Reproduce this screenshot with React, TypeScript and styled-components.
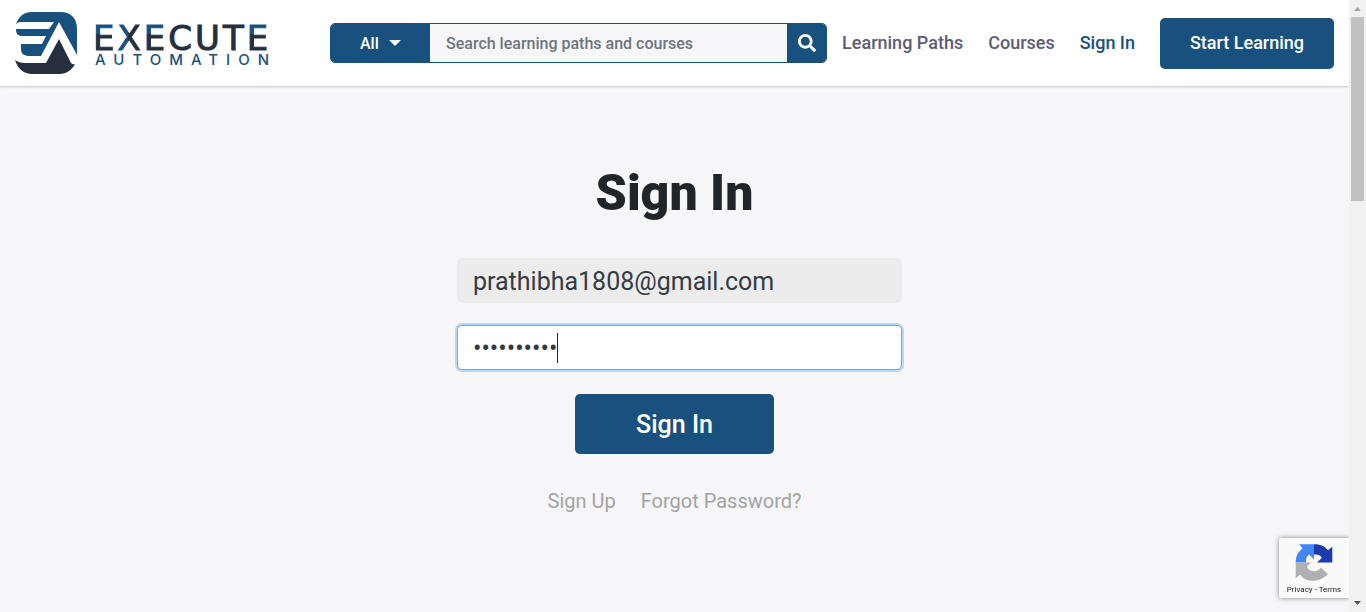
import React, { useState } from "react";
import styled, { createGlobalStyle, css } from "styled-components";

const blue = "#18517e";
const ink = "#252f3d";

const GlobalStyle = createGlobalStyle`
  *, *::before, *::after { box-sizing: border-box; }
  body {
    margin: 0;
    background: #f6f6f8;
    color: #212529;
    font-family: Roboto, "Liberation Sans", sans-serif;
    font-size: 16px;
    line-height: 24px;
  }
  button, input, select { font-family: inherit; margin: 0; }
  a { text-decoration: none; }
`;

const Page = styled.div`
  min-height: 100vh;
  padding-right: 17px;
`;

const Header = styled.header`
  display: flex;
  align-items: center;
  height: 86px;
  padding: 0 15px;
  background: #fff;
  box-shadow: 0 1px 2px rgba(0, 0, 0, 0.2);
`;

const Brand = styled.a`
  display: flex;
  flex: none;
  align-items: center;
  gap: 16px;
  width: 255px;
  margin-right: 60px;
`;

const Mark = styled.svg`
  flex: none;
  width: 62px;
  height: 62px;
`;

const Wordmark = styled.span`
  display: flex;
  flex-direction: column;
  padding-top: 6px;
`;

const BrandName = styled.span`
  display: flex;
  gap: 3px;
  color: ${ink};
  font: 34px/28px "DejaVu Sans", sans-serif;
  -webkit-text-stroke: 1px;
`;

const Letter = styled.span`
  display: block;
`;

const TwoTone = styled(Letter)<{ $angle: string; $stop: string }>`
  background: linear-gradient(${(p) => p.$angle}, ${blue} ${(p) => p.$stop}, ${ink} ${(p) => p.$stop});
  background-clip: text;
  -webkit-background-clip: text;
  color: transparent;
`;

const BrandSub = styled.span`
  padding-left: 2px;
  color: ${blue};
  font: 500 15px/16px Inter, sans-serif;
  letter-spacing: 8px;
  white-space: nowrap;
`;

const Search = styled.form`
  display: flex;
  flex: 1;
  min-width: 0;
  height: 40px;
  margin-right: 15px;
  overflow: hidden;
  border: 1px solid ${blue};
  border-radius: 5px;
  background: #f6f6f8;
`;

const FilterBox = styled.label`
  display: flex;
  flex: none;
  align-items: center;
  justify-content: center;
  gap: 10px;
  width: 99px;
  background: ${blue};
`;

const Filter = styled.select`
  appearance: none;
  padding: 0;
  border: 0;
  background: transparent;
  color: #fff;
  font-size: 16px;
  font-weight: 500;
`;

const SearchInput = styled.input`
  flex: 1;
  min-width: 0;
  padding: 0 16px;
  border: 0;
  outline: 0;
  background: transparent;
  font-size: 16px;
  font-weight: 500;
  &::placeholder { color: #6c757d; opacity: 1; }
`;

const SearchButton = styled.button`
  display: flex;
  flex: none;
  align-items: center;
  justify-content: center;
  width: 39px;
  padding: 0;
  border: 0;
  background: ${blue};
`;

const Nav = styled.nav`
  display: flex;
  flex: none;
  align-items: center;
  gap: 25px;
`;

const NavLink = styled.a<{ $active?: boolean }>`
  color: ${(p) => (p.$active ? blue : "#5c5c77")};
  font-size: 18px;
  font-weight: 500;
`;

const buttonLook = css`
  border: 0;
  border-radius: 5px;
  background: ${blue};
  color: #fff;
  font-weight: 500;
`;

const StartButton = styled.button`
  ${buttonLook}
  width: 174px;
  height: 51px;
  padding: 0 0 2px;
  font-size: 18px;
`;

const Main = styled.main`
  display: flex;
  flex-direction: column;
  align-items: center;
  padding: 77px 15px 60px;
`;

const Title = styled.h1`
  margin: 0 0 35px;
  font-size: 50px;
  font-weight: 900;
  line-height: 60px;
`;

const LoginForm = styled.form`
  display: flex;
  flex-direction: column;
  align-items: center;
  width: 100%;
`;

const Field = styled.div`
  position: relative;
  width: 100%;
  max-width: 455px;
  padding-left: 10px;
  margin-bottom: 22px;
`;

const TextInput = styled.input<{ $focused?: boolean }>`
  display: block;
  width: 100%;
  height: 45px;
  padding: 1px 15px 0;
  border: 1px solid ${(p) => (p.$focused ? "#8fa3b8" : "transparent")};
  border-radius: 5px;
  outline: 0;
  background: ${(p) => (p.$focused ? "#fff" : "#ececec")};
  background-clip: border-box;
  box-shadow: ${(p) => (p.$focused ? "0 0 0 2px #b8d8fb" : "none")};
  color: #333c42;
  font-size: 25px;
`;

const Caret = styled.span`
  position: absolute;
  top: 8px;
  left: 110px;
  width: 1px;
  height: 30px;
  background: #212529;
`;

const SubmitButton = styled.button`
  ${buttonLook}
  width: 199px;
  height: 60px;
  margin-top: 2px;
  font-size: 25px;
`;

const Links = styled.div`
  display: flex;
  gap: 25px;
  margin-top: 35px;
`;

const QuietLink = styled.a`
  color: #a3a3a3;
  font-size: 20px;
`;

const Recaptcha = styled.aside`
  position: fixed;
  right: 17px;
  bottom: 14px;
  display: flex;
  flex-direction: column;
  align-items: center;
  width: 70px;
  height: 60px;
  padding-top: 5px;
  border-radius: 2px 0 0 2px;
  background: #f9f9f9;
  box-shadow: 0 0 5px gray;
  clip-path: inset(-8px 0 -8px -8px);
`;

const Legal = styled.span`
  color: #222;
  font-size: 8px;
  line-height: 16px;
  white-space: nowrap;
  a { color: inherit; }
`;

const ScrollTrack = styled.div`
  position: fixed;
  top: 0;
  right: 0;
  bottom: 0;
  display: flex;
  flex-direction: column;
  align-items: center;
  width: 17px;
  background: #f1f1f1;
`;

const ScrollRail = styled.div`
  flex: 1;
`;

const ScrollArrow = styled.svg`
  display: block;
  flex: none;
  width: 17px;
  height: 17px;
`;

const Thumb = styled.div`
  width: 13px;
  height: 30vh;
  background: #c1c1c1;
`;

const LogoMark = () => (
  <Mark viewBox="0 0 62 62" aria-hidden="true">
    <path d="M1 12C4 4 9 0 17 0H45C56 0 62 6 62 17V43L44 10L26 44H15C9 44 6 42 6 37V32H27L31 24H7C3 24 1 22 1 17H34L39 10H6Q3 10 1 12Z" fill={blue} />
    <path d="M0 48Q4 51 10 51H31L44 27L56 51Q58 53 60 52C57 58 51 62 45 62H17C9 62 3 57 0 48Z" fill={ink} />
  </Mark>
);

const SearchIcon = () => (
  <svg width="18" height="18" viewBox="0 0 512 512" fill="#fff" aria-hidden="true">
    <path d="M505 442.700 405.300 343c-4.500-4.500-10.600-7-17-7H372c27.600-35.300 44-79.700 44-128C416 93.100 322.900 0 208 0S0 93.100 0 208s93.100 208 208 208c48.300 0 92.700-16.400 128-44v16.300c0 6.400 2.500 12.500 7 17l99.700 99.700c9.400 9.400 24.600 9.400 33.900 0l28.300-28.300c9.400-9.400 9.400-24.600.1-34zM208 336c-70.700 0-128-57.200-128-128 0-70.700 57.200-128 128-128 70.700 0 128 57.200 128 128 0 70.700-57.200 128-128 128z" />
  </svg>
);

const RecaptchaIcon = () => (
  <svg width="40" height="40" viewBox="0 0 64 64" aria-hidden="true">
    <path d="M62 32V6L55 12C49 4 41 2 32 2V19C38 18 42 20 45 24L37 32Z" fill="#1c3aa9" />
    <path d="M32 2H8L13 9C5 15 2 23 2 32H19C18 26 20 22 24 19L32 27Z" fill="#4285f4" />
    <path d="M2 32V58L9 52C16 61 27 64 37 61C44 60 50 56 55 51L43 40C39 46 34 47 29 46C25 45 22 43 20 39L27 32Z" fill="#b0b0b0" />
  </svg>
);

export default function App() {
  const [email, setEmail] = useState("prathibha1808@gmail.com");
  const [password, setPassword] = useState("automation");
  const stay = (e: React.FormEvent) => e.preventDefault();

  return (
    <>
      <GlobalStyle />
      <Page>
        <Header>
          <Brand href="#" aria-label="Execute Automation">
            <LogoMark />
            <Wordmark>
              <BrandName>
                <TwoTone $angle="180deg" $stop="35%">E</TwoTone>
                <TwoTone $angle="90deg" $stop="45%">X</TwoTone>
                <TwoTone $angle="180deg" $stop="35%">E</TwoTone>
                <Letter>C</Letter>
                <Letter>U</Letter>
                <Letter>T</Letter>
                <TwoTone $angle="180deg" $stop="35%">E</TwoTone>
              </BrandName>
              <BrandSub>AUTOMATION</BrandSub>
            </Wordmark>
          </Brand>
          <Search role="search" onSubmit={stay}>
            <FilterBox>
              <Filter aria-label="Category">
                <option>All</option>
              </Filter>
              <svg width="12" height="6" viewBox="0 0 12 6" aria-hidden="true">
                <path d="M0 0H12L6 6Z" fill="#fff" />
              </svg>
            </FilterBox>
            <SearchInput aria-label="Search" placeholder="Search learning paths and courses" />
            <SearchButton aria-label="Submit search">
              <SearchIcon />
            </SearchButton>
          </Search>
          <Nav>
            <NavLink href="#paths">Learning Paths</NavLink>
            <NavLink href="#courses">Courses</NavLink>
            <NavLink href="#signin" $active>Sign In</NavLink>
            <StartButton type="button">Start Learning</StartButton>
          </Nav>
        </Header>
        <Main>
          <Title>Sign In</Title>
          <LoginForm onSubmit={stay}>
            <Field>
              <TextInput type="email" aria-label="Email" value={email} onChange={(e) => setEmail(e.target.value)} />
            </Field>
            <Field>
              <TextInput $focused type="password" aria-label="Password" value={password} onChange={(e) => setPassword(e.target.value)} />
              <Caret />
            </Field>
            <SubmitButton>Sign In</SubmitButton>
          </LoginForm>
          <Links>
            <QuietLink href="#signup">Sign Up</QuietLink>
            <QuietLink href="#forgot">Forgot Password?</QuietLink>
          </Links>
        </Main>
      </Page>
      <Recaptcha>
        <RecaptchaIcon />
        <Legal>
          <a href="#privacy">Privacy</a> - <a href="#terms">Terms</a>
        </Legal>
      </Recaptcha>
      <ScrollTrack aria-hidden="true">
        <ScrollArrow viewBox="0 0 17 17">
          <path d="M5 11H12L8.500 7Z" fill="#a3a3a3" />
        </ScrollArrow>
        <Thumb />
        <ScrollRail />
        <ScrollArrow viewBox="0 0 17 17">
          <path d="M5 6H12L8.500 10Z" fill="#505050" />
        </ScrollArrow>
      </ScrollTrack>
    </>
  );
}
